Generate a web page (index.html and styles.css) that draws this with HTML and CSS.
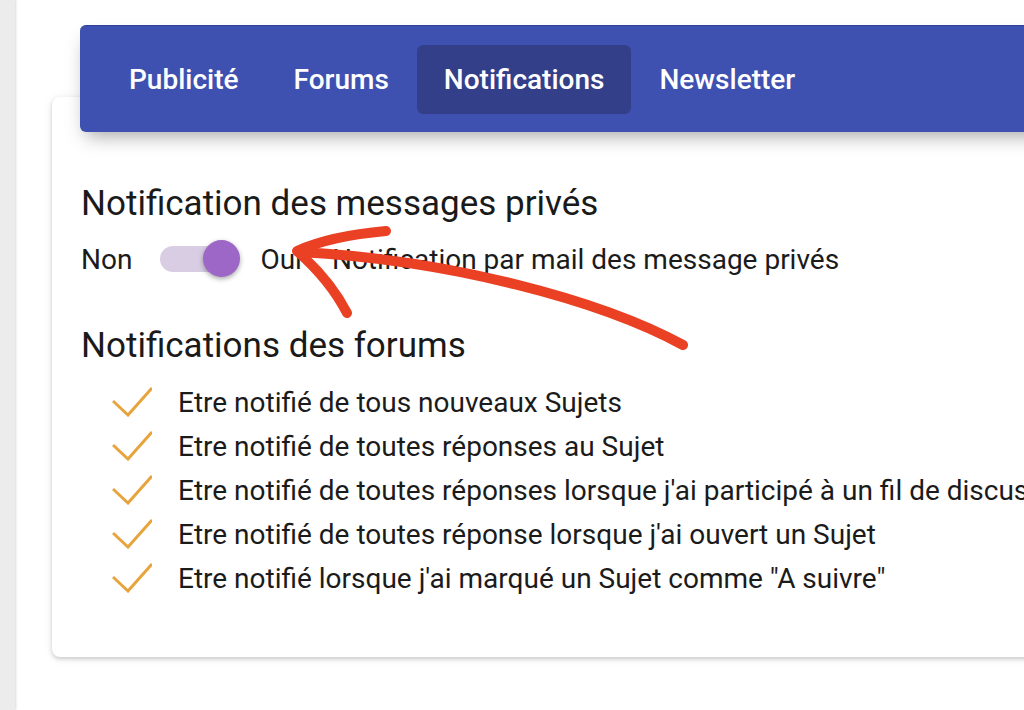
FILE: index.html
```html
<!DOCTYPE html>
<html lang="fr">
<head>
<meta charset="utf-8">
<link rel="stylesheet" href="styles.css">
</head>
<body>
<div class="layout">
  <div class="sidebar"></div>
  <main class="main">
    <section class="card">
      <nav class="tabs">
        <a class="tab">Publicité</a>
        <a class="tab">Forums</a>
        <a class="tab active">Notifications</a>
        <a class="tab">Newsletter</a>
      </nav>
      <div class="card-body">
        <h3 class="title">Notification des messages privés</h3>
        <div class="switch-row">
          <span class="lbl">Non</span>
          <span class="switch"><span class="track"></span><span class="thumb"></span></span>
          <span class="lbl oui">Oui</span>
          <span class="desc">Notification par mail des message privés</span>
        </div>
        <h3 class="title title2">Notifications des forums</h3>
        <ul class="checks">
          <li><svg class="ck" viewBox="0 0 40 30"><polyline points="1,14 16,28 40,1"/></svg>Etre notifié de tous nouveaux Sujets</li>
          <li><svg class="ck" viewBox="0 0 40 30"><polyline points="1,14 16,28 40,1"/></svg>Etre notifié de toutes réponses au Sujet</li>
          <li><svg class="ck" viewBox="0 0 40 30"><polyline points="1,14 16,28 40,1"/></svg>Etre notifié de toutes réponses lorsque j'ai participé à un fil de discussion</li>
          <li><svg class="ck" viewBox="0 0 40 30"><polyline points="1,14 16,28 40,1"/></svg>Etre notifié de toutes réponse lorsque j'ai ouvert un Sujet</li>
          <li><svg class="ck" viewBox="0 0 40 30"><polyline points="1,14 16,28 40,1"/></svg>Etre notifié lorsque j'ai marqué un Sujet comme "A suivre"</li>
        </ul>
      </div>
    </section>
  </main>
</div>
<svg class="annot" viewBox="0 0 1024 710" width="1024" height="710">
  <path d="M683,345 C600,300 450,260 300,252" />
  <path d="M386,231 Q330,236 297,251 Q330,280 347,313" />
</svg>
</body>
</html>
```
FILE: styles.css
```css
html, body {
  margin: 0;
  padding: 0;
  background: #ffffff;
  overflow: hidden;
  width: 1024px;
  height: 710px;
}
body {
  font-family: Roboto, "Liberation Sans", sans-serif;
  color: #1b1b1b;
  position: relative;
}
.layout {
  display: flex;
  height: 710px;
}
.sidebar {
  flex: 0 0 15px;
  background: #ececec;
  box-shadow: 1px 0 2px rgba(0,0,0,0.15);
}
.main {
  flex: 1;
  padding-left: 37px;
  padding-top: 97px;
  min-width: 0;
}
.card {
  display: flow-root;
  width: 1100px;
  height: 560px;
  background: #fff;
  border-radius: 8px;
  box-shadow: 0 2px 4px rgba(0,0,0,0.18), 0 1px 12px rgba(0,0,0,0.06);
}
.tabs {
  display: flex;
  gap: 1px;
  margin: -72px 0 0 28px;
  height: 107px;
  box-sizing: border-box;
  padding: 19px 0 18px 22px;
  background: #3f51b0;
  border-top: 1px solid #2f3f9a;
  border-radius: 6px;
  box-shadow: 0 10px 18px -6px rgba(0,0,0,0.35);
}
.tab {
  display: flex;
  align-items: center;
  padding: 0 27px;
  font-size: 28px;
  font-weight: 500;
  color: #fff;
  border-radius: 6px;
}
.tab.active {
  background: #343f8a;
}
.card-body {
  padding: 49px 0 0 29px;
}
.title {
  margin: 0;
  font-size: 35px;
  font-weight: 400;
  line-height: 46px;
  color: #1a1a1a;
}
.switch-row {
  display: flex;
  align-items: center;
  height: 40px;
  margin-top: 12px;
  font-size: 28px;
}
.switch {
  position: relative;
  width: 80px;
  height: 40px;
  margin: 0 20px 0 28px;
}
.track {
  position: absolute;
  left: 0;
  top: 7px;
  width: 74px;
  height: 26px;
  border-radius: 13px;
  background: #d9cde3;
}
.thumb {
  position: absolute;
  left: 43px;
  top: 1px;
  width: 37px;
  height: 37px;
  border-radius: 50%;
  background: #9c67c6;
  box-shadow: 0 2px 5px rgba(0,0,0,0.35);
}
.desc {
  margin-left: 30px;
}
.title2 {
  margin-top: 44px;
}
.checks {
  list-style: none;
  margin: 11px 0 0 0;
  padding: 0 0 0 31px;
  font-size: 28px;
}
.checks li {
  display: flex;
  align-items: center;
  height: 44px;
  white-space: nowrap;
}
.ck {
  width: 40px;
  height: 30px;
  margin-right: 26px;
  fill: none;
  stroke: #e8a43c;
  stroke-width: 3;
}
.annot {
  position: absolute;
  left: 0;
  top: 0;
  pointer-events: none;
}
.annot path {
  fill: none;
  stroke: #ea4125;
  stroke-width: 10;
  stroke-linecap: round;
  stroke-linejoin: round;
}
```
